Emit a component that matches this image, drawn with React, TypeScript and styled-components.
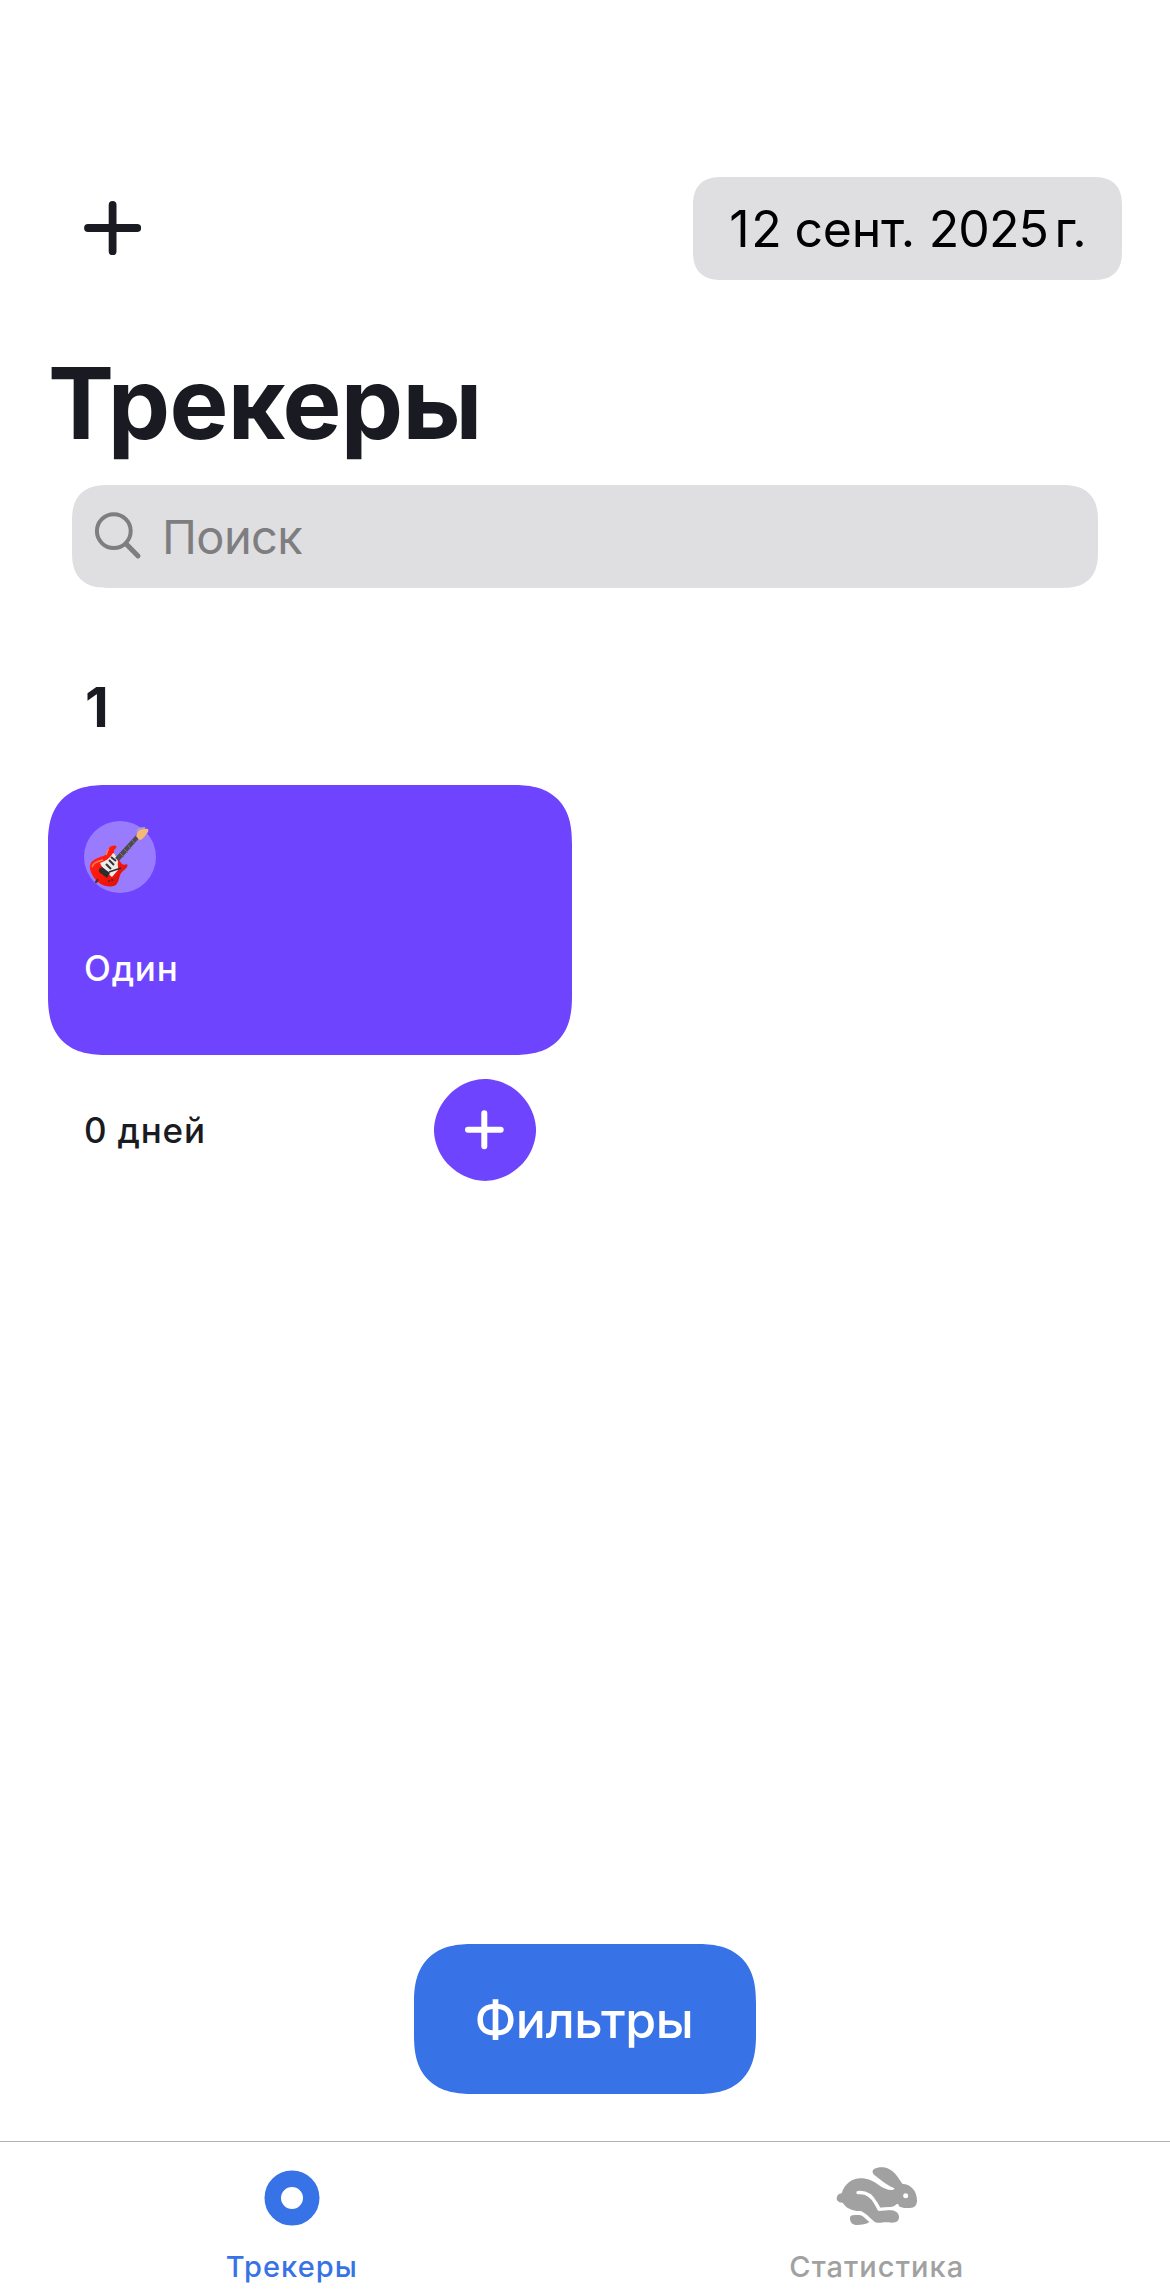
import React from "react";
import styled, { createGlobalStyle } from "styled-components";

const GlobalStyle = createGlobalStyle`
  *, *::before, *::after { box-sizing: border-box; }
  body { margin: 0; background: #fff; }
  button { font: inherit; border: 0; padding: 0; cursor: pointer; }
`;

const Screen = styled.div`
  display: flex;
  flex-direction: column;
  width: 1170px;
  height: 2289px;
  overflow: hidden;
  background: #fff;
  color: #1a1b22;
  font-family: Inter, "Noto Sans", sans-serif;
`;

const NavBar = styled.header`
  display: flex;
  align-items: center;
  justify-content: space-between;
  height: 103px;
  margin-top: 177px;
  padding: 0 48px 0 84px;
`;

const AddButton = styled.button`
  display: flex;
  background: none;
  color: #1a1b22;
`;

const DatePill = styled.div`
  display: flex;
  align-items: center;
  justify-content: center;
  width: 429px;
  height: 103px;
  border-radius: 27px;
  background: #dfdfe1;
  color: #000;
  font-size: 50px;
  line-height: 60px;
  white-space: pre;
  @supports (corner-shape: superellipse(1.33)) {
    border-radius: 29px;
    corner-shape: superellipse(1.33);
  }
`;

const DatePart = styled.span<{ $tracking: number; $pull?: number }>`
  margin-left: ${(p) => -(p.$pull ?? 0)}px;
  letter-spacing: ${(p) => p.$tracking}px;
`;

const Title = styled.h1`
  margin: 63px 0 0 48px;
  font-size: 99px;
  line-height: 120px;
  font-weight: 700;
  letter-spacing: -0.7px;
`;

const SearchField = styled.div`
  display: flex;
  align-items: center;
  gap: 18px;
  height: 103px;
  margin: 22px 72px 0;
  padding-left: 22px;
  border-radius: 33px;
  background: #dfdfe1;
  color: #7e7e81;
  font-size: 47px;
  line-height: 56px;
  letter-spacing: -0.6px;
  @supports (corner-shape: superellipse(1.33)) {
    border-radius: 36px;
    corner-shape: superellipse(1.33);
  }
`;

const SectionTitle = styled.h2`
  margin: 86px 0 0 85px;
  font-size: 55px;
  line-height: 66px;
  font-weight: 700;
`;

const Tracker = styled.article`
  width: 524px;
  margin: 45px 0 0 48px;
`;

const TrackerCard = styled.div`
  display: flex;
  flex-direction: column;
  align-items: flex-start;
  gap: 54px;
  height: 270px;
  padding: 36px;
  border-radius: 52px;
  background: #6e44fe;
  color: #fff;
  @supports (corner-shape: superellipse(1.33)) {
    border-radius: 59px;
    corner-shape: superellipse(1.33);
  }
`;

const EmojiBadge = styled.div`
  display: flex;
  width: 72px;
  height: 72px;
  border-radius: 50%;
  background: rgba(255, 255, 255, 0.3);
`;

const CardLabel = styled.span`
  font-size: 35px;
  line-height: 42px;
  font-weight: 500;
  letter-spacing: 0.8px;
`;

const TrackerFooter = styled.div`
  display: flex;
  align-items: center;
  justify-content: space-between;
  padding: 24px 36px 0;
`;

const CompleteButton = styled.button`
  display: flex;
  align-items: center;
  justify-content: center;
  width: 102px;
  height: 102px;
  border-radius: 51px;
  background: #6e44fe;
  color: #fff;
  @supports (corner-shape: superellipse(0.95)) {
    corner-shape: superellipse(0.95);
  }
`;

const FilterButton = styled.button`
  align-self: center;
  width: 342px;
  height: 150px;
  margin-top: auto;
  border-radius: 52px;
  background: #3872e7;
  color: #fff;
  && {
    padding: 2px 2px 0 0;
    font-size: 50px;
    line-height: 60px;
    font-weight: 500;
    letter-spacing: -0.45px;
  }
  @supports (corner-shape: superellipse(1.33)) {
    border-radius: 59px;
    corner-shape: superellipse(1.33);
  }
`;

const TabBar = styled.nav`
  display: grid;
  grid-template-columns: 1fr 1fr;
  height: 148px;
  margin-top: 47px;
  border-top: 1px solid #b2b2b2;
`;

const Tab = styled.a<{ $active?: boolean }>`
  display: flex;
  flex-direction: column;
  align-items: center;
  padding: 16px 1.5px 0 0;
  color: ${(p) => (p.$active ? "#3872e7" : "#a1a1a1")};
  font-size: 29px;
  line-height: 34px;
  font-weight: 500;
  letter-spacing: 1.05px;
`;

const TabIcon = styled.svg`
  display: block;
  width: 90px;
  height: 80px;
  margin-bottom: 12px;
`;

const Guitar = () => (
  <svg width="72" height="72" viewBox="0 0 72 72">
    <defs>
      <linearGradient id="guitarBody" x1="0" y1="0" x2="1" y2="1">
        <stop offset="0" stopColor="#ff2a1c" />
        <stop offset="0.55" stopColor="#fb1509" />
        <stop offset="1" stopColor="#c91410" />
      </linearGradient>
    </defs>
    <path d="M24 28c2-3 5-4 7-3.500 2 .5 2 2.500 0 3.500-2 2-1 5 1 7l6 8c2 2 5-1 5.500 1 0 4-5 5-7 9-2 5-2 11-7 12-8 2-15-2-20-9-5-8-5-14 1-17.500 5-3 10-3 12.500-6 1-1.500 0-3 1-4.500Z" fill="url(#guitarBody)" />
    <path d="M8 46c1-5 7-6 11-7M22 34c1-2 1-5 3-6" stroke="#ff7961" strokeWidth="1.500" fill="none" />
    <path d="M16 42c6-2 10-5 13-10 2 0 2 3 4 4l1 5c-1 4 1 6 0 8l-6 7c-2-1-3-4-6-6-2-2-5-5-6-8Z" fill="#edeceb" />
    <path d="m31 37 23-25 3 3-22 25Z" fill="#4e4b4c" />
    <path d="m36 32 4 4m0-8 4 4m0-8 3 4m1-9 3 4" stroke="#777174" strokeWidth="1" />
    <path d="M53 13c0-3 3-5 7-5 4-1 5 0 4 3-2 2-3 5-6 7-2 2-3 1-6-3Z" fill="#f5b877" />
    <path d="M53 10c2-3 5-3 8-3" stroke="#a7a0c4" strokeWidth="1.800" fill="none" />
    <path d="m27 36 5 4m-7-1 5 5m-8-1 5 5" stroke="#343033" strokeWidth="2" />
    <path d="m15 48 3-2 8 6-3 5-8-6Z" fill="#302b2c" />
    <path d="m25 51 12-4" stroke="#34302f" strokeWidth="1.500" />
    <path d="M25 60h.1m3-1h.1M12 61l1.500-2" stroke="#5c2926" strokeWidth="2.200" strokeLinecap="round" />
  </svg>
);

const Rabbit = () => (
  <TabIcon viewBox="6 -6 270 240">
    <path
      fill="currentColor"
      d="M128 37c-2-8 8-15 27-15 16 0 31 8 43 22 8 10 14 20 20 28 24 0 43 21 43 49 0 15-6 23-22 23-19 1-30-3-39-10-10 9-20 9-50 10 7 1 15 5 28 6 18 1 29 8 29 21 0 12-7 17-21 17-12 0-20-2-31 0-10 1-18 1-24-5-13-11-24-24-38-30-26 1-45-9-55-25-10 1-18-5-18-13s6-14 15-15C43 72 66 55 92 55c21 0 37 8 53 19 14 10 29 17 42 16 5-1 7-3 6-5-17-7-34-19-48-31-8-6-16-9-17-17Z"
    />
    <path fill="none" stroke="#fff" strokeWidth="10" strokeLinecap="round" strokeLinejoin="round" d="M84 98c25-3 42 11 53 31 5 8 8 13 10 19 15-1 31-3 40-3 6 0 10-4 15-8" />
    <path fill="currentColor" d="M60 174c0-7 7-9 18-9 10 0 17 0 23 6l17 15c-10 7-23 9-36 9-15 0-22-7-22-21Z" />
    <circle cx="227" cy="107" r="7.500" fill="#fff" />
  </TabIcon>
);

export default function App() {
  return (
    <>
      <GlobalStyle />
      <Screen>
        <NavBar>
          <AddButton aria-label="Добавить">
            <svg width="57" height="57" viewBox="0 0 57 57" stroke="currentColor" strokeWidth="7.800" strokeLinecap="round">
              <path d="M4 28h49.200M28.600 5v46.200" />
            </svg>
          </AddButton>
          <DatePill>
            <DatePart $tracking={1.5}>12</DatePart>
            <DatePart $tracking={-0.3} $pull={2.4}> сент. </DatePart>
            <DatePart $tracking={-0.9}>2025</DatePart>
            <DatePart $tracking={-0.9} $pull={2.7}>{"\u202f"}г.</DatePart>
          </DatePill>
        </NavBar>
        <Title>Трекеры</Title>
        <SearchField>
          <svg width="50" height="50" viewBox="0 0 50 50" fill="none" stroke="currentColor" strokeLinecap="round">
            <circle cx="19.800" cy="19.100" r="16.900" strokeWidth="4" />
            <path d="m32 31.700 12 12.200" strokeWidth="5" />
          </svg>
          <span>Поиск</span>
        </SearchField>
        <SectionTitle>1</SectionTitle>
        <Tracker>
          <TrackerCard>
            <EmojiBadge><Guitar /></EmojiBadge>
            <CardLabel>Один</CardLabel>
          </TrackerCard>
          <TrackerFooter>
            <CardLabel>0 дней</CardLabel>
            <CompleteButton aria-label="Отметить">
              <svg width="40" height="40" viewBox="0 0 40 40" stroke="currentColor" strokeWidth="6" strokeLinecap="round">
                <path d="M3 19.700h32.700M19.300 3.300v33" />
              </svg>
            </CompleteButton>
          </TrackerFooter>
        </Tracker>
        <FilterButton>Фильтры</FilterButton>
        <TabBar>
          <Tab $active>
            <TabIcon viewBox="0 0 90 80">
              <circle cx="45" cy="40" r="19.250" fill="none" stroke="currentColor" strokeWidth="16.500" />
            </TabIcon>
            Трекеры
          </Tab>
          <Tab>
            <Rabbit />
            Статистика
          </Tab>
        </TabBar>
      </Screen>
    </>
  );
}
